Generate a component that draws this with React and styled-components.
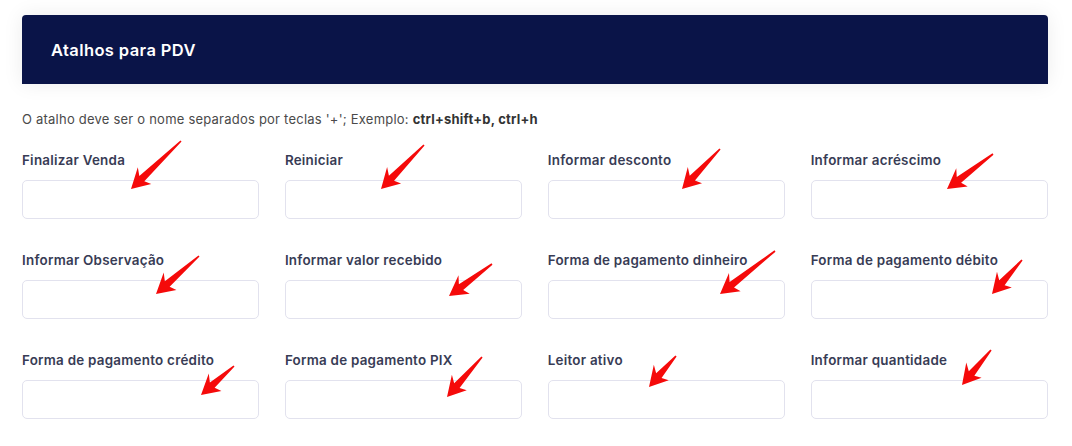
import React from 'react';
import styled, { createGlobalStyle } from 'styled-components';

const GlobalStyle = createGlobalStyle`
  body {
    margin: 0;
    background: #ffffff;
    font-family: Inter, "Open Sans", sans-serif;
  }
`;

const shortcuts = [
  'Finalizar Venda',
  'Reiniciar',
  'Informar desconto',
  'Informar acréscimo',
  'Informar Observação',
  'Informar valor recebido',
  'Forma de pagamento dinheiro',
  'Forma de pagamento débito',
  'Forma de pagamento crédito',
  'Forma de pagamento PIX',
  'Leitor ativo',
  'Informar quantidade',
];

// annotation arrows: tip point and tail point
const arrows = [
  { tip: [131, 189], tail: [181, 141] },
  { tip: [381, 189], tail: [424, 145] },
  { tip: [682, 189], tail: [720, 149] },
  { tip: [947, 189], tail: [993, 154] },
  { tip: [156, 294], tail: [199, 256] },
  { tip: [449, 296], tail: [492, 264] },
  { tip: [720, 294], tail: [775, 251] },
  { tip: [992, 294], tail: [1022, 260] },
  { tip: [201, 395], tail: [234, 366] },
  { tip: [447, 397], tail: [482, 357] },
  { tip: [649, 387], tail: [676, 356] },
  { tip: [962, 385], tail: [991, 350] },
];

const Arrow = ({ tip, tail }) => {
  const dx = tail[0] - tip[0];
  const dy = tail[1] - tip[1];
  const len = Math.sqrt(dx * dx + dy * dy);
  const angle = (Math.atan2(dy, dx) * 180) / Math.PI;
  const points = [
    [0, 0],
    [20, -11],
    [15, -3.6],
    [len, -0.8],
    [len, 0.8],
    [15, 3.6],
    [18, 10.5],
  ]
    .map(p => p.join(','))
    .join(' ');
  return (
    <ArrowSvg width="1072" height="446">
      <polygon
        points={points}
        fill="#f50a0a"
        transform={`translate(${tip[0]} ${tip[1]}) rotate(${angle})`}
      />
    </ArrowSvg>
  );
};

const App = () => {
  return (
    <Page>
      <GlobalStyle />
      <Header>
        <Title>Atalhos para PDV</Title>
      </Header>
      <Hint>
        O atalho deve ser o nome separados por teclas '+'; Exemplo: <b>ctrl+shift+b, ctrl+h</b>
      </Hint>
      <Grid>
        {shortcuts.map(name => (
          <Field key={name}>
            <Label>{name}</Label>
            <Input type="text" />
          </Field>
        ))}
      </Grid>
      {arrows.map((a, i) => (
        <Arrow key={i} tip={a.tip} tail={a.tail} />
      ))}
    </Page>
  );
};

const Page = styled.div`
  position: relative;
  padding: 15px 24px 0 22px;
  min-height: 446px;
  box-sizing: border-box;
`;

const Header = styled.div`
  height: 69px;
  background-color: #0a1448;
  border-radius: 4px 4px 0 0;
  box-shadow: 0 0 20px rgba(0, 0, 0, 0.08);
  display: flex;
  align-items: center;
  padding-left: 29px;
`;

const Title = styled.h2`
  margin: 0;
  color: #ffffff;
  font-size: 16.5px;
  font-weight: 600;
  letter-spacing: 0.4px;
`;

const Hint = styled.p`
  margin: 25px 0 21px;
  font-size: 13px;
  line-height: 20px;
  letter-spacing: 0.22px;
  color: #4a4a4a;

  b {
    font-weight: 700;
    color: #333333;
  }
`;

const Grid = styled.div`
  display: grid;
  grid-template-columns: repeat(4, 1fr);
  column-gap: 25.5px;
  row-gap: 31px;
`;

const Field = styled.div`
  display: flex;
  flex-direction: column;
  gap: 10px;
`;

const Label = styled.label`
  font-size: 13.4px;
  line-height: 20px;
  font-weight: 600;
  letter-spacing: 0.25px;
  color: #383c55;
`;

const Input = styled.input`
  height: 39px;
  box-sizing: border-box;
  border: 1px solid #e2e2ee;
  border-radius: 5px;
  background: #ffffff;
  padding: 0 10px;
  outline: none;
`;

const ArrowSvg = styled.svg`
  position: absolute;
  left: 0;
  top: 0;
  pointer-events: none;
`;

export default App;
